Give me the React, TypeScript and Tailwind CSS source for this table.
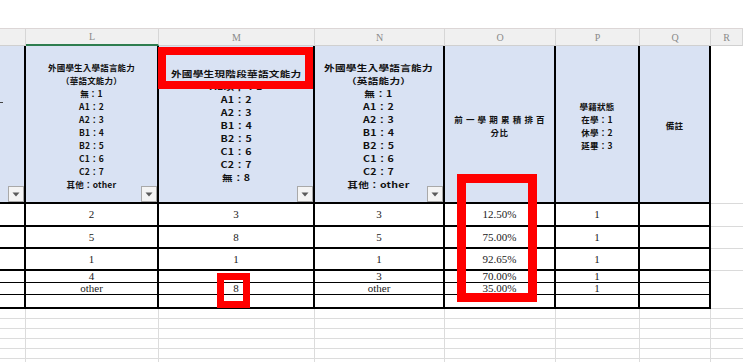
import React from "react";

const GRID = "grid grid-cols-[26px_133px_156px_130px_111px_84px_71px_1fr]";

function Dropdown() {
  return (
    <div className="absolute right-0 bottom-0 w-[16px] h-[16px] border border-[#a9a9a9] bg-[#f4f4f4] flex items-center justify-center">
      <svg width="8" height="5" viewBox="0 0 8 5">
        <path d="M0.5 0.5 L7.5 0.5 L4 4.5 Z" fill="#5a5a5a" />
      </svg>
    </div>
  );
}

const cjk = { fontFamily: '"Noto Sans CJK TC", "Noto Sans CJK SC", sans-serif' };
const serif = { fontFamily: '"Liberation Serif", "Noto Sans CJK TC", serif' };

function HeaderText({ lines, wide }: { lines: string[]; wide?: boolean }) {
  return (
    <div
      className={`flex flex-col items-center text-[8.5px] leading-[13px] font-bold text-[#111] tracking-[0.2px] whitespace-nowrap pt-[3px] ${wide ? "scale-x-125" : ""}`}
      style={cjk}
    >
      {lines.map((l, i) => (
        <div key={i}>{l}</div>
      ))}
    </div>
  );
}

const hCell = "relative bg-[#d9e2f3] border-r-2 border-b-2 border-black flex items-center justify-center";

const rows: { h: string; v: string[] }[] = [
  { h: "h-[23px]", v: ["2", "3", "3", "12.50%", "1"] },
  { h: "h-[22px]", v: ["5", "8", "5", "75.00%", "1"] },
  { h: "h-[22px]", v: ["1", "1", "1", "92.65%", "1"] },
  { h: "h-[12px]", v: ["4", "", "3", "70.00%", "1"] },
  { h: "h-[12px]", v: ["other", "8", "other", "35.00%", "1"] },
  { h: "h-[14px]", v: ["", "", "", "", ""] },
];

const letters = ["", "L", "M", "N", "O", "P", "Q", "R"];

export default function App() {
  return (
    <div className="relative w-[743px] h-[362px] overflow-hidden bg-white">
      <div className="h-[28px] bg-white" />
      <div className="h-[1px] bg-[#dcd6d6]" />
      <div className={`${GRID} h-[17px] bg-[#f0f0f0]`}>
        {letters.map((l, i) => (
          <div
            key={i}
            className={`flex items-center justify-center text-[10px] text-[#8a8a8a] border-r border-[#d6d6d6] ${i === 1 ? "border-b-2 border-b-[#2e7d4f]" : "border-b border-b-[#d0d0d0]"}`}
            style={serif}
          >
            {l}
          </div>
        ))}
      </div>

      {/* header row */}
      <div className={`${GRID} h-[158px]`}>
        <div className={`${hCell} justify-start`}>
          <span className="absolute left-0 top-[56px] w-[3px] h-[1px] bg-[#444]" />
          <Dropdown />
        </div>
        <div className={hCell}>
          <HeaderText lines={["外國學生入學語言能力", "（華語文能力）", "無：1", "A1：2", "A2：3", "B1：4", "B2：5", "C1：6", "C2：7", "其他：other"]} />
          <Dropdown />
        </div>
        <div className={hCell}>
          <HeaderText wide lines={["外國學生現階段華語文能力", "A1以下：1", "A1：2", "A2：3", "B1：4", "B2：5", "C1：6", "C2：7", "無：8"]} />
          <Dropdown />
        </div>
        <div className={hCell}>
          <HeaderText wide lines={["外國學生入學語言能力", "（英語能力）", "無：1", "A1：2", "A2：3", "B1：4", "B2：5", "C1：6", "C2：7", "其他：other"]} />
          <Dropdown />
        </div>
        <div className={hCell}>
          <div className="flex flex-col items-center text-[8.5px] leading-[13px] font-bold text-[#111] whitespace-nowrap pt-[3px]" style={cjk}>
            <div className="tracking-[3.2px] pl-[3px]">前一學期累積排百</div>
            <div className="tracking-[0.5px]">分比</div>
          </div>
        </div>
        <div className={hCell}>
          <HeaderText lines={["學籍狀態", "在學：1", "休學：2", "延畢：3"]} />
        </div>
        <div className={hCell}>
          <HeaderText lines={["備註"]} />
        </div>
        <div className="bg-white border-b border-[#dadada]" />
      </div>

      {/* data rows */}
      {rows.map((r, ri) => (
        <div key={ri} className={`${GRID} ${r.h}`}>
          <div className="border-r-2 border-b-2 border-black bg-white" />
          {r.v.map((v, ci) => (
            <div
              key={ci}
              className="border-r-2 border-b-2 border-black bg-white flex items-center justify-center text-[11px] leading-none text-[#1a1a1a]"
              style={serif}
            >
              {v}
            </div>
          ))}
          <div className="border-r-2 border-b-2 border-black bg-white" />
          <div className="border-b border-[#dadada] bg-white" />
        </div>
      ))}

      {/* empty grid below */}
      {[0, 1, 2, 3, 4, 5].map((i) => (
        <div key={i} className={`${GRID} h-[10px]`}>
          {letters.map((_, ci) => (
            <div key={ci} className={`border-b border-[#dcdcdc] ${ci < 7 ? "border-r border-r-[#dcdcdc]" : ""}`} />
          ))}
        </div>
      ))}

      {/* red highlight boxes */}
      <div className="absolute left-[158px] top-[47px] w-[155px] h-[42px] border-[8px] border-[#ff0000]" />
      <div className="absolute left-[457px] top-[174px] w-[80px] h-[128px] border-[9px] border-[#ff0000]" />
      <div className="absolute left-[217px] top-[273px] w-[33px] h-[35px] border-[7px] border-[#ff0000]" />
    </div>
  );
}
